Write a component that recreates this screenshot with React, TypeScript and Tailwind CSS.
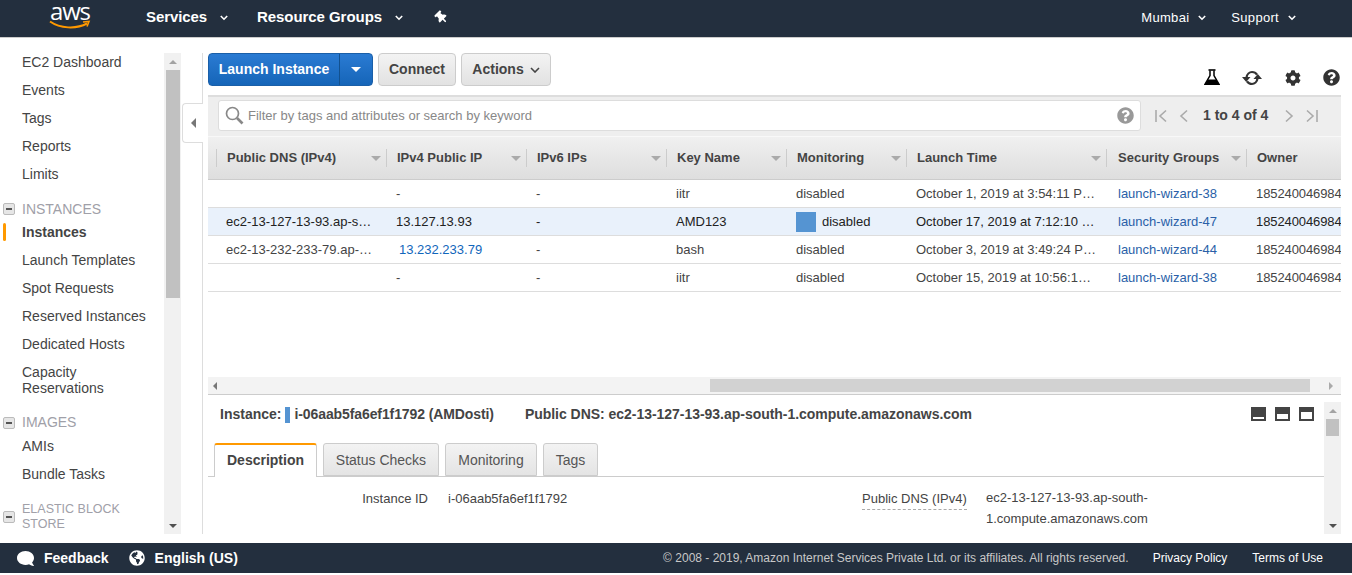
import { FaCog, FaComment, FaGlobeAmericas, FaQuestionCircle, FaThumbtack } from "react-icons/fa";

const COLUMNS = [
  { label: "Public DNS (IPv4)", width: "w-[170px]", pad: "pl-[10px]" },
  { label: "IPv4 Public IP", width: "w-[140px]", pad: "pl-[10px]" },
  { label: "IPv6 IPs", width: "w-[140px]", pad: "pl-[10px]" },
  { label: "Key Name", width: "w-[120px]", pad: "pl-[10px]" },
  { label: "Monitoring", width: "w-[120px]", pad: "pl-[10px]" },
  { label: "Launch Time", width: "w-[200px]", pad: "pl-[10px]" },
  { label: "Security Groups", width: "w-[140px]", pad: "pl-[11px]" },
  { label: "Owner", width: "w-[100px]", pad: "pl-[10px]" },
];

const ROWS = [
  { dns: "", ip: "-", key: "iitr", alarm: false, time: "October 1, 2019 at 3:54:11 P…", group: "launch-wizard-38", selected: false },
  { dns: "ec2-13-127-13-93.ap-s…", ip: "13.127.13.93", key: "AMD123", alarm: true, time: "October 17, 2019 at 7:12:10 …", group: "launch-wizard-47", selected: true },
  { dns: "ec2-13-232-233-79.ap-…", ip: "13.232.233.79", key: "bash", alarm: false, time: "October 3, 2019 at 3:49:24 P…", group: "launch-wizard-44", selected: false, ipLink: true },
  { dns: "", ip: "-", key: "iitr", alarm: false, time: "October 15, 2019 at 10:56:1…", group: "launch-wizard-38", selected: false },
];

function Caret({ className }: { className: string }) {
  return <span className={`block w-0 h-0 border-x-[5px] border-x-transparent border-t-[5px] ${className}`} />;
}

function NavChevron() {
  return (
    <svg width="8" height="6" viewBox="0 0 8 6" className="shrink-0">
      <path d="M.8 1l3.2 3.2L7.2 1" fill="none" stroke="#fff" strokeWidth="1.6" />
    </svg>
  );
}

function NavItem({ label, bold }: { label: string; bold?: boolean }) {
  return (
    <div className={`relative h-7 flex items-center pl-[22px] ${bold ? "font-bold" : ""}`}>
      {bold && <span className="absolute left-[3px] top-[5px] w-[3px] h-[18px] rounded-sm bg-[#f90]" />}
      {label}
    </div>
  );
}

function NavHeading({ children, extra }: { children: React.ReactNode; extra: string }) {
  return (
    <div className={`flex items-center text-[#a0a0a8] leading-[15px] ${extra}`}>
      <span className="w-[12px] h-[12px] ml-[3px] mr-[7px] shrink-0 flex items-center justify-center rounded-[2px] border border-[#bbb] bg-[#e6e6e6]">
        <span className="w-[6px] h-[2px] bg-[#555]" />
      </span>
      <span>{children}</span>
    </div>
  );
}

function Sidebar() {
  return (
    <aside className="w-[181px] shrink-0 flex text-[#444]">
      <nav className="w-[164px] shrink-0 -mt-[5px] overflow-hidden">
        <NavItem label="EC2 Dashboard" />
        <NavItem label="Events" />
        <NavItem label="Tags" />
        <NavItem label="Reports" />
        <NavItem label="Limits" />
        <NavHeading extra="h-[18px] mt-3">INSTANCES</NavHeading>
        <NavItem label="Instances" bold />
        <NavItem label="Launch Templates" />
        <NavItem label="Spot Requests" />
        <NavItem label="Reserved Instances" />
        <NavItem label="Dedicated Hosts" />
        <div className="pl-[22px] py-1.5 leading-4">Capacity<br />Reservations</div>
        <NavHeading extra="h-[19px] mt-[11px]">IMAGES</NavHeading>
        <NavItem label="AMIs" />
        <NavItem label="Bundle Tasks" />
        <NavHeading extra="mt-[14px] text-[12.5px]">ELASTIC BLOCK<br />STORE</NavHeading>
      </nav>
      <div className="w-[17px] bg-[#f1f1f1] flex flex-col items-center">
        <div className="h-[17px] flex items-center justify-center">
          <span className="block w-0 h-0 border-x-[4px] border-x-transparent border-b-[4px] border-b-[#a3a3a3]" />
        </div>
        <div className="w-[14px] h-[228px] bg-[#c1c1c1]" />
        <div className="mt-auto h-[17px] flex items-center justify-center">
          <span className="block w-0 h-0 border-x-[4px] border-x-transparent border-t-[4px] border-t-[#505050]" />
        </div>
      </div>
    </aside>
  );
}

function PagerIcon({ flip, bar }: { flip?: boolean; bar?: boolean }) {
  return (
    <svg width="14" height="14" viewBox="0 0 14 14" className={flip ? "-scale-x-100" : ""}>
      {bar && <path d="M2 1v12" stroke="#aaa" strokeWidth="1.6" />}
      <path d={bar ? "M12 1.5L6 7l6 5.5" : "M10 1.5L4 7l6 5.5"} fill="none" stroke="#aaa" strokeWidth="1.6" />
    </svg>
  );
}

function FlaskIcon() {
  return (
    <svg width="16" height="17" viewBox="0 0 16 17">
      <path d="M4.5 1h7" stroke="#000" strokeWidth="1.6" />
      <path d="M6 1.500v5L1 15.200h14L10 6.500v-5" fill="none" stroke="#000" strokeWidth="1.500" />
      <path d="M3.800 10.500h8.400L15.500 16H.5z" fill="#000" />
    </svg>
  );
}

function RefreshIcon() {
  return (
    <svg width="20" height="16" viewBox="0 0 20 16">
      <path d="M4.500 7.500C5 4 7.500 2 10 2c2.300 0 3.900.9 5 2.600" fill="none" stroke="#333" strokeWidth="2.200" />
      <path d="M15.500 8.500C15 12 12.500 14 10 14c-2.300 0-3.900-.9-5-2.600" fill="none" stroke="#333" strokeWidth="2.200" />
      <path d="M0 7h8.500L4.200 12zM20 9h-8.500L15.800 4z" fill="#333" />
    </svg>
  );
}

function Toolbar() {
  return (
    <div className="h-[42px] flex items-start">
      <div className="h-[33px] flex rounded-[4px] border border-[#1a5fa8] bg-linear-to-b from-[#2a7bd3] to-[#1565b8] text-white font-bold">
        <span className="w-[131px] flex items-center justify-center border-r border-[#12518f]">Launch Instance</span>
        <span className="w-[32px] flex items-center justify-center">
          <Caret className="border-t-white" />
        </span>
      </div>
      <button className="h-[33px] w-[78px] ml-[5px] rounded-[4px] border border-[#ccc] bg-linear-to-b from-[#f3f3f3] to-[#e2e2e2] font-bold text-[#444]">Connect</button>
      <button className="h-[33px] w-[90px] ml-[5px] rounded-[4px] border border-[#ccc] bg-linear-to-b from-[#f3f3f3] to-[#e2e2e2] font-bold text-[#444] flex items-center justify-center gap-[6px]">
        Actions
        <svg width="10" height="6" viewBox="0 0 10 6">
          <path d="M1 1l4 4 4-4" fill="none" stroke="#444" strokeWidth="1.6" />
        </svg>
      </button>
      <div className="ml-auto mr-px mt-4 flex items-center text-[#333]">
        <FlaskIcon />
        <span className="ml-[22px]"><RefreshIcon /></span>
        <FaCog size={16} className="ml-[23px]" />
        <FaQuestionCircle size={17} className="ml-[22px]" />
      </div>
    </div>
  );
}

function SearchStrip() {
  return (
    <div className="h-[42px] border-t-2 border-[#ddd] bg-[#eeeeee] flex items-start pt-[3px] pl-[10px] text-[13px] border-b border-b-[#f8f8f8]">
      <div className="w-[923px] h-[31px] bg-white rounded-[3px] border border-[#ddd] flex items-center pl-[6px] pr-[6px]">
        <svg width="19" height="19" viewBox="0 0 19 19" className="shrink-0">
          <circle cx="7.5" cy="7.5" r="6" fill="none" stroke="#888" strokeWidth="1.7" />
          <path d="M12 12l5.5 5.5" stroke="#888" strokeWidth="2.6" />
        </svg>
        <span className="ml-[4px] text-[#888]">Filter by tags and attributes or search by keyword</span>
        <FaQuestionCircle size={17} className="ml-auto text-[#999]" />
      </div>
      <div className="ml-[13px] h-[31px] flex items-center text-[#444]">
        <PagerIcon bar />
        <span className="ml-[9px]"><PagerIcon /></span>
        <span className="ml-[12px] mr-px font-bold text-[14px] text-[#444]">1 to 4 of 4</span>
        <span className="ml-[13px]"><PagerIcon flip /></span>
        <span className="ml-[9px]"><PagerIcon flip bar /></span>
      </div>
    </div>
  );
}

function InstanceTable() {
  return (
    <div className="h-[240px] overflow-hidden text-[13px]">
      <div className="h-[43px] flex items-center pl-2 border-b border-[#ccc] bg-linear-to-b from-[#f0f0f0] to-[#dedede]">
        {COLUMNS.map((col) => (
          <div key={col.label} className={`${col.width} ${col.pad} shrink-0 h-[18px] pr-[5px] flex items-center border-l border-[#ccc] font-bold text-[#444]`}>
            <span className="whitespace-nowrap">{col.label}</span>
            {col.label !== "Owner" && <span className="ml-auto"><Caret className="border-t-[#aaa]" /></span>}
          </div>
        ))}
      </div>
      {ROWS.map((row, i) => (
        <div key={i} className={`h-7 flex items-center pl-2 border-b border-[#ddd] whitespace-nowrap ${row.selected ? "bg-[#e9f1fb] text-[#222]" : "text-[#444]"}`}>
          <span className="w-[170px] shrink-0 pl-[10px]">{row.dns}</span>
          <span className={`w-[140px] shrink-0 ${row.ipLink ? "pl-[13px] text-[#1166bb]" : "pl-[10px]"}`}>{row.ip}</span>
          <span className="w-[140px] shrink-0 pl-[10px]">-</span>
          <span className="w-[120px] shrink-0 pl-[10px]">{row.key}</span>
          <span className="w-[120px] shrink-0 pl-[10px] flex items-center">
            {row.alarm && <span className="w-5 h-5 mr-[6px] bg-[#5594d2]" />}
            disabled
          </span>
          <span className="w-[200px] shrink-0 pl-[10px]">{row.time}</span>
          <span className="w-[140px] shrink-0 pl-3 text-[#2a5fa8]">{row.group}</span>
          <span className="shrink-0 pl-[10px] tracking-[-0.1px]">185240046984</span>
        </div>
      ))}
    </div>
  );
}

function HorizontalScroll() {
  return (
    <div className="h-[18px] bg-[#f3f3f3] border-b border-[#ccc] flex items-center">
      <span className="ml-[5px] block w-0 h-0 border-y-[4px] border-y-transparent border-r-[4px] border-r-[#777]" />
      <div className="ml-[493px] w-[600px] h-[13px] bg-[#d2d2d2]" />
      <span className="ml-[19px] block w-0 h-0 border-y-[4px] border-y-transparent border-l-[4px] border-l-[#aaa]" />
    </div>
  );
}

function PaneIcon({ variant }: { variant: "bottom" | "middle" | "top" }) {
  const hole = {
    bottom: "mt-[10px] h-[2px]",
    middle: "mt-[7px] h-[5px]",
    top: "mt-[5px] h-[7px]",
  }[variant];
  return (
    <span className="w-[15px] h-[14px] bg-[#444] block px-[2px] overflow-hidden">
      <span className={`block bg-white ${hole}`} />
    </span>
  );
}

function Tab({ label, active, width }: { label: string; active?: boolean; width: string }) {
  if (active) {
    return (
      <div className={`${width} h-[34px] pb-[2px] flex items-center justify-center bg-white border-x border-[#ccc] border-t-2 border-t-[#f90] rounded-t-[3px] font-bold text-[#444] -mb-px relative`}>
        {label}
      </div>
    );
  }
  return (
    <div className={`${width} h-[33px] pt-px flex items-center justify-center bg-linear-to-b from-[#f3f3f3] to-[#e4e4e4] border border-[#ccc] rounded-t-[3px] text-[#555]`}>
      {label}
    </div>
  );
}

function DetailPane() {
  return (
    <div className="flex h-[139px] text-[#444]">
      <div className="w-[1116px] shrink-0 overflow-hidden">
        <div className="h-[48px] pt-[10px] pl-3 pr-[10px] flex items-start leading-[19px] font-bold">
          <span>Instance:</span>
          <span className="w-[5px] h-[16px] mt-[2px] ml-[4px] mr-[4px] bg-[#5594d2]" />
          <span className="tracking-[-0.1px]">i-06aab5fa6ef1f1792 (AMDosti)</span>
          <span className="ml-[31px] tracking-[-0.03px]">Public DNS: ec2-13-127-13-93.ap-south-1.compute.amazonaws.com</span>
          <span className="ml-auto flex items-center gap-[9px] mt-[2px]">
            <PaneIcon variant="bottom" />
            <PaneIcon variant="middle" />
            <PaneIcon variant="top" />
          </span>
        </div>
        <div className="h-[34px] pl-1.5 flex items-end gap-[6px] border-b border-[#ccc]">
          <Tab label="Description" active width="w-[103px]" />
          <Tab label="Status Checks" width="w-[116px]" />
          <Tab label="Monitoring" width="w-[92px]" />
          <Tab label="Tags" width="w-[55px]" />
        </div>
        <div className="flex items-start pt-[12px] text-[13px]">
          <span className="w-[220px] text-right">Instance ID</span>
          <span className="w-[434px] pl-5">i-06aab5fa6ef1f1792</span>
          <span className="w-[124px]">
            <span className="border-b border-dashed border-[#aaa] pb-[3px]">Public DNS (IPv4)</span>
          </span>
          <span className="w-[170px] leading-[21px] -mt-[2px]">ec2-13-127-13-93.ap-south-1.compute.amazonaws.com</span>
        </div>
      </div>
      <div className="w-[17px] mt-[7px] bg-[#f1f1f1] flex flex-col items-center">
        <div className="h-[17px] flex items-center justify-center">
          <span className="block w-0 h-0 border-x-[4px] border-x-transparent border-b-[4px] border-b-[#a3a3a3]" />
        </div>
        <div className="w-[13px] h-[17px] bg-[#c1c1c1]" />
        <div className="mt-auto h-[17px] flex items-center justify-center">
          <span className="block w-0 h-0 border-x-[4px] border-x-transparent border-t-[4px] border-t-[#505050]" />
        </div>
      </div>
    </div>
  );
}

export default function App() {
  return (
    <div className="w-[1352px] h-[575px] overflow-hidden bg-white text-[14px] font-['Liberation_Sans',Arial,sans-serif]">
      <header className="h-[38px] pb-[2px] bg-[#232f3e] border-b border-[#ccc] flex items-center text-white">
        <div className="relative w-[146px] h-[35px] shrink-0">
          <span className="absolute left-[50px] top-0 text-[24px] leading-[22px] tracking-[-1.2px] font-['Open_Sans',sans-serif]">aws</span>
          <svg width="42" height="10" viewBox="0 0 42 10" className="absolute left-[49px] top-[20px]">
            <path d="M1 1.500c10 7 26 8 37 2" fill="none" stroke="#f90" strokeWidth="2" />
            <path d="M34 2l6-.5-2 5" fill="none" stroke="#f90" strokeWidth="1.6" />
          </svg>
        </div>
        <span className="font-bold text-[15px] tracking-[-0.1px]">Services</span>
        <span className="ml-[13px]"><NavChevron /></span>
        <span className="ml-[29px] font-bold text-[15px] tracking-[-0.05px]">Resource Groups</span>
        <span className="ml-[13px]"><NavChevron /></span>
        <FaThumbtack size={13} className="ml-[32px] -rotate-45" />
        <span className="ml-auto text-[13px] tracking-[0.3px]">Mumbai</span>
        <span className="ml-[9px]"><NavChevron /></span>
        <span className="ml-[25px] text-[13px] tracking-[0.3px]">Support</span>
        <span className="ml-[9px] mr-[56px]"><NavChevron /></span>
      </header>

      <main className="h-[505px] pt-[15px] pb-[9px] flex relative">
        <Sidebar />
        <div className="ml-[21px] w-[6px] shrink-0 border-l border-[#ddd]" />
        <div className="w-[1133px] shrink-0">
          <Toolbar />
          <SearchStrip />
          <InstanceTable />
          <HorizontalScroll />
          <DetailPane />
        </div>
        {/* collapse tab sits over the divider */}
        <div className="absolute left-[182px] top-[65px] w-[21px] h-[40px] bg-white border border-r-0 border-[#ddd] rounded-l-[4px] flex items-center justify-center">
          <span className="block w-0 h-0 border-y-[5px] border-y-transparent border-r-[5px] border-r-[#777]" />
        </div>
      </main>

      <footer className="h-[30px] bg-[#232f3e] flex items-center text-white">
        <FaComment size={17} className="ml-[17px] -scale-x-100" />
        <span className="ml-[10px] font-bold">Feedback</span>
        <FaGlobeAmericas size={16} className="ml-[20px]" />
        <span className="ml-[10px] font-bold">English (US)</span>
        <span className="ml-auto text-[12px] text-[#c8c8c8]">© 2008 - 2019, Amazon Internet Services Private Ltd. or its affiliates. All rights reserved.</span>
        <span className="ml-[24px] text-[12px]">Privacy Policy</span>
        <span className="ml-[25px] mr-[29px] text-[12px]">Terms of Use</span>
      </footer>
    </div>
  );
}
